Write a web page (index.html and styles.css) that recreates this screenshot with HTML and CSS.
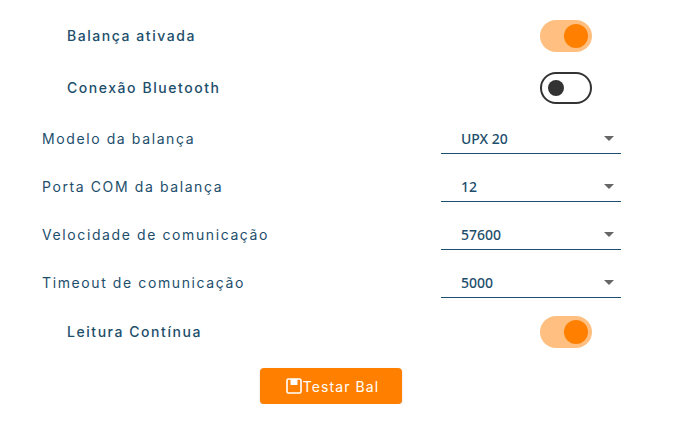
FILE: index.html
```html
<!DOCTYPE html>
<html lang="pt-BR">
<head>
    <meta charset="UTF-8">
    <meta name="viewport" content="width=device-width, initial-scale=1.0">
    <title>Balança</title>
    <link rel="stylesheet" href="styles.css">
</head>
<body>
    <div class="container">
        <div class="toggle-row">
            <span class="toggle-label">Balança ativada</span>
            <span class="switch on"><span class="knob"></span></span>
        </div>
        <div class="toggle-row">
            <span class="toggle-label">Conexão Bluetooth</span>
            <span class="switch off"><span class="knob"></span></span>
        </div>

        <div class="select-rows">
            <div class="select-row">
                <span class="select-label">Modelo da balança</span>
                <div class="select"><span>UPX 20</span><span class="arrow"></span></div>
            </div>
            <div class="select-row">
                <span class="select-label">Porta COM da balança</span>
                <div class="select"><span>12</span><span class="arrow"></span></div>
            </div>
            <div class="select-row">
                <span class="select-label">Velocidade de comunicação</span>
                <div class="select"><span>57600</span><span class="arrow"></span></div>
            </div>
            <div class="select-row">
                <span class="select-label">Timeout de comunicação</span>
                <div class="select"><span>5000</span><span class="arrow"></span></div>
            </div>
        </div>

        <div class="toggle-row">
            <span class="toggle-label">Leitura Contínua</span>
            <span class="switch on"><span class="knob"></span></span>
        </div>

        <div class="actions">
            <button class="btn-test">
                <svg class="btn-icon" viewBox="0 0 16 16" width="16" height="16">
                    <rect x="1" y="1" width="14" height="14" rx="1.500" fill="none" stroke="#fff" stroke-width="1.600"/>
                    <rect x="4.500" y="1" width="7" height="6" rx="0.500" fill="#fff"/>
                </svg>
                <span class="btn-text">Testar Bal</span>
            </button>
        </div>
    </div>
</body>
</html>
```

FILE: styles.css
```css
body {
    margin: 0;
    background-color: #fff;
    font-family: "Inter", "Open Sans", sans-serif;
    color: #1d4e6b;
}
.container {
    width: 674px;
    padding-top: 20px;
    box-sizing: border-box;
}
.toggle-row {
    display: flex;
    justify-content: space-between;
    align-items: center;
    height: 32px;
    margin-bottom: 20px;
    padding: 0 82px 0 67px;
}
.toggle-label {
    padding-bottom: 1px;
    font-size: 14px;
    font-weight: 500;
    letter-spacing: 1.55px;
}
.switch {
    display: flex;
    align-items: center;
    width: 52px;
    height: 32px;
    box-sizing: border-box;
    border-radius: 16px;
}
.switch.on {
    justify-content: flex-end;
    padding-right: 4px;
    background-color: #ffbf80;
}
.switch.on .knob {
    width: 24px;
    height: 24px;
    background-color: #ff8000;
}
.switch.off {
    padding-left: 6px;
    background-color: #fff;
    border: 2px solid #333;
}
.switch.off .knob {
    width: 16px;
    height: 16px;
    background-color: #333;
}
.knob {
    border-radius: 50%;
}
.select-rows {
    margin-top: -18px;
    margin-bottom: 18px;
}
.select-row {
    display: flex;
    justify-content: space-between;
    height: 48px;
    padding: 0 53px 0 42px;
}
.select-label {
    margin-top: 23.500px;
    font-size: 14px;
    letter-spacing: 1.600px;
}
.select {
    display: flex;
    justify-content: space-between;
    align-items: center;
    width: 180px;
    height: 48px;
    box-sizing: border-box;
    padding: 18px 7px 0 20px;
    border-bottom: 1px solid #1d4e6b;
    font-family: "Noto Sans", sans-serif;
    font-size: 14px;
    font-weight: 500;
}
.arrow {
    width: 0;
    height: 0;
    border-left: 5px solid transparent;
    border-right: 5px solid transparent;
    border-top: 5px solid #666;
}
.actions {
    display: flex;
    justify-content: center;
    padding-right: 12px;
}
.btn-test {
    display: flex;
    align-items: center;
    justify-content: center;
    width: 142px;
    height: 36px;
    padding: 0 0 0 3px;
    border: none;
    border-radius: 4px;
    background-color: #ff8000;
    color: #fff;
    font-family: "Inter", sans-serif;
    font-size: 14px;
    letter-spacing: 1.100px;
    box-shadow: 0 1px 2px rgba(0, 0, 0, 0.2);
}
.btn-text {
    margin-left: 1px;
}
```
